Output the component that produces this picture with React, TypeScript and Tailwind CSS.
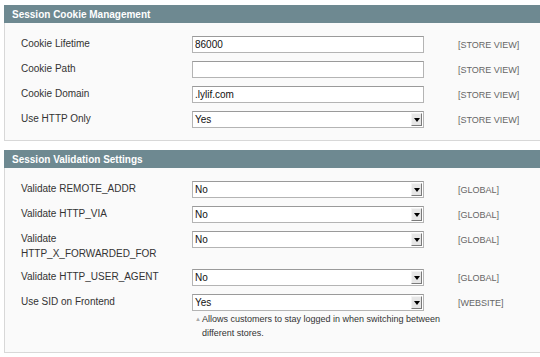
import React from "react";

type Row = {
  label: string[];
  kind: "text" | "select";
  value: string;
  scope: string;
  note?: string[];
};

const cookieRows: Row[] = [
  { label: ["Cookie Lifetime"], kind: "text", value: "86000", scope: "[STORE VIEW]" },
  { label: ["Cookie Path"], kind: "text", value: "", scope: "[STORE VIEW]" },
  { label: ["Cookie Domain"], kind: "text", value: ".lylif.com", scope: "[STORE VIEW]" },
  { label: ["Use HTTP Only"], kind: "select", value: "Yes", scope: "[STORE VIEW]" },
];

const validationRows: Row[] = [
  { label: ["Validate REMOTE_ADDR"], kind: "select", value: "No", scope: "[GLOBAL]" },
  { label: ["Validate HTTP_VIA"], kind: "select", value: "No", scope: "[GLOBAL]" },
  { label: ["Validate", "HTTP_X_FORWARDED_FOR"], kind: "select", value: "No", scope: "[GLOBAL]" },
  { label: ["Validate HTTP_USER_AGENT"], kind: "select", value: "No", scope: "[GLOBAL]" },
  {
    label: ["Use SID on Frontend"],
    kind: "select",
    value: "Yes",
    scope: "[WEBSITE]",
    note: ["Allows customers to stay logged in when switching between", "different stores."],
  },
];

const Field = ({ kind, value }: { kind: Row["kind"]; value: string }) => {
  return (
    <div className="relative h-[17px] w-[232px] border border-[#b4b4b4] border-t-[#9a9a9a] bg-white pl-[2px] text-[10px] leading-[15px] text-[#111]">
      {value}
      {kind === "select" && (
        <div className="absolute right-[1px] top-[1px] flex h-[13px] w-[11px] items-center justify-center border border-[#f4f4f4] border-r-[#7a7a7a] border-b-[#7a7a7a] bg-[#e6e6e6]">
          <svg width="6" height="4" viewBox="0 0 6 4">
            <path d="M0 0H6L3 4Z" fill="#000" />
          </svg>
        </div>
      )}
    </div>
  );
};

const Section = ({ title, rows }: { title: string; rows: Row[] }) => {
  return (
    <div>
      <div className="flex h-[18px] items-center bg-[#6e8991] pl-2 text-[10px] font-bold text-white">
        {title}
      </div>
      <div className="flex flex-col gap-2 border border-t-0 border-[#d8d8d8] bg-[#fafafa] pb-3 pl-4 pt-[13px]">
        {rows.map((row) => (
          <div key={row.label.join(" ")} className="flex items-start">
            <div className="w-[171px] text-[10px] leading-[14px] text-[#333]">
              {row.label.map((l) => (
                <div key={l} className="pt-[1px]">{l}</div>
              ))}
            </div>
            <div className="w-[232px]">
              <Field kind={row.kind} value={row.value} />
              {row.note && (
                <div className="relative mt-[1px] whitespace-nowrap pl-[10px] text-[9px] leading-[14px] text-[#333]">
                  <span className="absolute left-[3px] top-0 text-[6px] text-[#aaa]">▲</span>
                  {row.note.map((n) => (
                    <div key={n}>{n}</div>
                  ))}
                </div>
              )}
            </div>
            <div className="pl-[34px] pt-[2px] text-[9px] leading-[14px] text-[#666]">{row.scope}</div>
          </div>
        ))}
      </div>
    </div>
  );
};

export default function App() {
  return (
    <div className="h-[357px] w-[540px] overflow-hidden bg-white font-['Liberation_Sans',Arial,sans-serif]">
      <div className="ml-1 mt-[5px] flex w-[560px] flex-col gap-[9px]">
        <Section title="Session Cookie Management" rows={cookieRows} />
        <Section title="Session Validation Settings" rows={validationRows} />
      </div>
    </div>
  );
}
